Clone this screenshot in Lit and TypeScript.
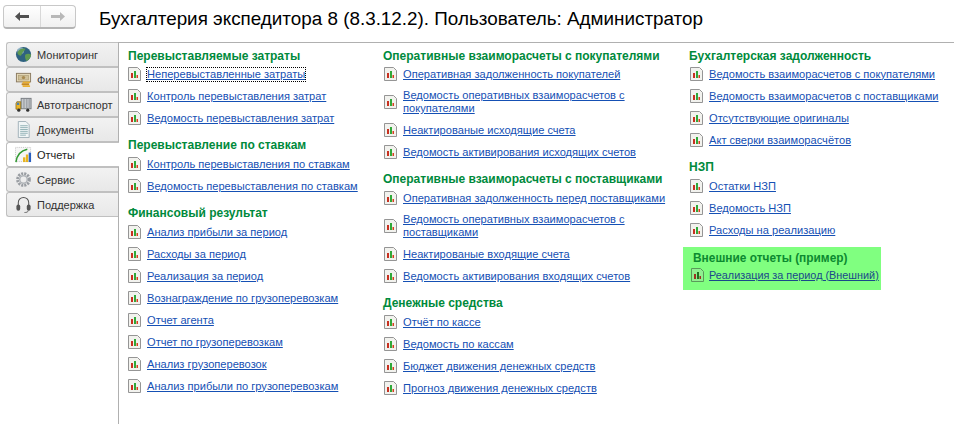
import { LitElement, html, css, svg } from "lit";
import { customElement } from "lit/decorators.js";

type Sec = { t: string; items: string[]; ext?: boolean };
const cols: Sec[][] = [
  [
    { t: "Перевыставляемые затраты", items: ["Неперевыставленные затраты", "Контроль перевыставления затрат", "Ведомость перевыставления затрат"] },
    { t: "Перевыставление по ставкам", items: ["Контроль перевыставления по ставкам", "Ведомость перевыставления по ставкам"] },
    { t: "Финансовый результат", items: ["Анализ прибыли за период", "Расходы за период", "Реализация за период", "Вознаграждение по грузоперевозкам", "Отчет агента", "Отчет по грузоперевозкам", "Анализ грузоперевозок", "Анализ прибыли по грузоперевозкам"] },
  ],
  [
    { t: "Оперативные взаиморасчеты с покупателями", items: ["Оперативная задолженность покупателей", "Ведомость оперативных взаиморасчетов с покупателями", "Неактированые исходящие счета", "Ведомость активирования исходящих счетов"] },
    { t: "Оперативные взаиморасчеты с поставщиками", items: ["Оперативная задолженность перед поставщиками", "Ведомость оперативных взаиморасчетов с поставщиками", "Неактированые входящие счета", "Ведомость активирования входящих счетов"] },
    { t: "Денежные средства", items: ["Отчёт по кассе", "Ведомость по кассам", "Бюджет движения денежных средств", "Прогноз движения денежных средств"] },
  ],
  [
    { t: "Бухгалтерская задолженность", items: ["Ведомость взаиморасчетов с покупателями", "Ведомость взаиморасчетов с поставщиками", "Отсутствующие оригиналы", "Акт сверки взаиморасчётов"] },
    { t: "НЗП", items: ["Остатки НЗП", "Ведомость НЗП", "Расходы на реализацию"] },
    { t: "Внешние отчеты (пример)", items: ["Реализация за период (Внешний)"], ext: true },
  ],
];

const icons: Record<string, unknown> = {
  "Мониторинг": svg`<circle cx="9" cy="9" r="8" fill="#2f6280"/><circle cx="6" cy="5" r="3.500" fill="#a8c8d8" opacity=".7"/><path d="M3 6c2-3 5-4 8-3 0 2-2 2-3 4s-1 4-3 3-3-2-2-4zM11 9c2-1 4-1 6 0 0 3-2 6-5 7-1-2-2-5-1-7z" fill="#5f9a50"/>`,
  "Финансы": svg`<rect x="1.500" y="2.500" width="15" height="9" fill="#e4d8b8" stroke="#8a7a60"/><rect x="3.500" y="4.500" width="11" height="5" fill="#cfc09a" stroke="#a89870" stroke-width=".6"/><circle cx="9" cy="7" r="1.800" fill="#a88a50"/><rect x="8" y="11" width="8" height="2" rx=".5" fill="#eab030"/><rect x="7" y="13" width="8" height="2" rx=".5" fill="#c88a20"/><rect x="8" y="15" width="8" height="2" rx=".5" fill="#eab030"/>`,
  "Автотранспорт": svg`<rect x="6.500" y="2.500" width="10.500" height="11" fill="#c4c8cc" stroke="#777c80"/><path d="M9.500 3v10M12.500 3v10M15 3v10" stroke="#8f9498"/><path d="M1 8l1-2h4v8H1z" fill="#e8b428" stroke="#806010" stroke-width=".7"/><rect x="2" y="7" width="2.500" height="2.500" fill="#4a80b0"/><circle cx="4" cy="15" r="1.700" fill="#333"/><circle cx="13.500" cy="15" r="1.700" fill="#333"/>`,
  "Документы": svg`<path d="M3.500 .5h8l3.500 3.500v13.500h-11.500z" fill="#f0f5f6" stroke="#a0b0b8"/><path d="M5.500 5h8M5.500 7h8M5.500 9h8M5.500 11h8M5.500 13h8M5.500 15h6" stroke="#8fb0b4"/>`,
  "Отчеты": svg`<rect x=".5" y="1.500" width="16" height="15" fill="#f6f6f6" stroke="#c4c4c4" stroke-dasharray="1 1"/><path d="M1 17C2 10 6 5 13 3.500" fill="none" stroke="#2f9a30" stroke-width="1.600"/><rect x="8.500" y="12" width="2.500" height="5" fill="#e8b420"/><rect x="11.500" y="9" width="2.500" height="8" fill="#e8b420"/><rect x="14.500" y="7" width="2.500" height="10" fill="#2a60c0"/>`,
  "Сервис": svg`<circle cx="9" cy="9" r="6.300" fill="none" stroke="#999da2" stroke-width="3" stroke-dasharray="2.200 1.100"/><circle cx="9" cy="9" r="4" fill="none" stroke="#b0b4b8" stroke-width="1.600"/>`,
  "Поддержка": svg`<path d="M3.500 10V7a5.500 5.500 0 0 1 11 0v3" fill="none" stroke="#555" stroke-width="1.100"/><rect x="1.500" y="9" width="4" height="6.500" rx="2" fill="#555"/><rect x="12.500" y="9" width="4" height="6.500" rx="2" fill="#555"/><path d="M14 15.500c0 1.500-2 2-4 2" fill="none" stroke="#666"/>`,
};

const tabs = ["Мониторинг", "Финансы", "Автотранспорт", "Документы", "Отчеты", "Сервис", "Поддержка"];

@customElement("app-root")
export class AppRoot extends LitElement {
  static styles = css`
    :host { display: block; width: 954px; height: 424px; background: #fff; font-family: "Liberation Sans", Arial, sans-serif; overflow: hidden; }
    .top { display: flex; align-items: flex-start; height: 42px; padding: 5px 0 0 3px; box-sizing: border-box; }
    .nav { display: flex; width: 73px; height: 24px; border: 1px solid #c8c8c8; border-bottom: 2px solid #b4b4b4; border-radius: 4px; background: linear-gradient(#fff, #f0f0f0); box-sizing: border-box; flex: none; }
    .nav div { display: flex; align-items: center; justify-content: center; }
    .nav div:first-child { width: 36px; }
    .nav div + div { flex: 1; border-left: 1px solid #d8d8d8; }
    h1 { margin: 2px 0 0 23px; font-weight: 400; font-size: 18.85px; line-height: 24px; color: #000; white-space: nowrap; }
    .main { display: flex; height: 382px; }
    .tabs { width: 112px; margin-left: 6px; flex: none; border-right: 1px solid #b0b0b0; }
    .tab { display: flex; align-items: center; height: 25px; border: 1px solid #c0c0c0; border-right: none; border-top-left-radius: 3px; border-bottom-left-radius: 3px; background: linear-gradient(#f2f2f2, #e8e8e8); font-size: 11px; color: #333; box-sizing: border-box; }
    .tab svg { margin: 0 5px 0 8px; flex: none; }
    .tab.on { background: #fff; margin-right: -1px; position: relative; color: #222; }
    .body { flex: 1; display: flex; border-top: 1px solid #b0b0b0; padding-left: 9px; }
    .col { flex: none; display: flex; flex-direction: column; padding-top: 6px; }
    .c0 { width: 255px; } .c1 { width: 306px; } .c2 { width: 250px; }
    .sec { margin-bottom: 5px; }
    h2 { margin: 0 0 5px; font-size: 12px; line-height: 14px; font-weight: 700; color: #008a3c; white-space: nowrap; }
    .sec:first-child h2 { margin-bottom: 4px; }
    .row { display: flex; align-items: center; min-height: 14px; margin-bottom: 8px; }
    .row svg { flex: none; margin: 0 6px 0 1px; }
    .c0 .row svg { margin: 0 6px 0 0; }
    a { font-size: 11.1px; line-height: 13px; color: #1550b4; text-decoration: underline; max-width: 270px; }
    .focus a { outline: 1px dotted #000; }
    .ext { background: #80ff80; margin: -3px 0 0 -6px; padding: 4px 0 0 10px; width: 198px; height: 43px; box-sizing: border-box; }
    .ext h2, .sec.ext:not(:first-child) h2 { color: #0c8a30; margin-bottom: 3px; font-size: 11.9px; }
    .ext .row svg { margin: 0 5px 0 -2px; }
    .ext a { color: #1a4a8a; white-space: nowrap; font-size: 10.85px; }
  `;

  private rep(ext: boolean) {
    return html`<svg width="13" height="14" viewBox="0 0 13 14"><path d="M.5.500h9l3 3v10H.5z" fill="${ext ? "#90f090" : "#f2f2ee"}" stroke="${ext ? "#5a9a5a" : "#959595"}"/><rect x="3" y="6" width="2" height="5" fill="${ext ? "#a03020" : "#c83020"}"/><rect x="6" y="4" width="2" height="7" fill="${ext ? "#207020" : "#30a838"}"/><rect x="8.500" y="8" width="1.500" height="3" fill="${ext ? "#a03020" : "#d84020"}"/></svg>`;
  }

  render() {
    return html`
      <div class="top">
        <div class="nav">
          <div><svg width="14" height="9" viewBox="0 0 14 9"><path d="M0 4.500L5 0v3h9v3H5v3z" fill="#505050"/></svg></div>
          <div><svg width="14" height="9" viewBox="0 0 14 9"><path d="M14 4.500L9 0v3H0v3h9v3z" fill="#b8b8b8"/></svg></div>
        </div>
        <h1>Бухгалтерия экспедитора 8 (8.3.12.2). Пользователь: Администратор</h1>
      </div>
      <div class="main">
        <div class="tabs">
          ${tabs.map((t) => html`<div class="tab ${t === "Отчеты" ? "on" : ""}"><svg width="17" height="17" viewBox="0 0 18 18">${icons[t]}</svg>${t}</div>`)}
        </div>
        <div class="body">
          ${cols.map((c, i) => html`<div class="col c${i}">
            ${c.map((s) => html`<div class="sec ${s.ext ? "ext" : ""}">
              <h2>${s.t}</h2>
              ${s.items.map((it) => html`<div class="row ${it === "Неперевыставленные затраты" ? "focus" : ""}">${this.rep(!!s.ext)}<a>${it}</a></div>`)}
            </div>`)}
          </div>`)}
        </div>
      </div>
    `;
  }
}
